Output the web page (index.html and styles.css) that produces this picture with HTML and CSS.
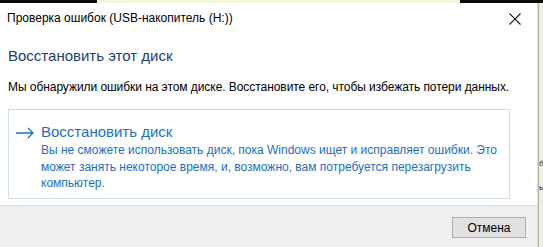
FILE: index.html
```html
<!DOCTYPE html>
<html>
<head>
   <title>Проверка ошибок</title>
   <link rel="stylesheet" href="styles.css">
</head>
<body>
   <!-- полоска фона сверху -->
   <div class="top-strip">
       <div class="strip-dark strip-left"></div>
       <div class="strip-light"></div>
       <div class="strip-dark strip-right"></div>
   </div>

   <div class="screen">
       <!-- окно диалога -->
       <div class="dialog">
           <div class="title-bar">
               <span class="title-text">Проверка ошибок (USB-накопитель (H:))</span>
               <span class="close-btn">
                   <svg width="12" height="12" viewBox="0 0 12 12">
                       <path d="M0.5 0.5 L11.5 11.5 M11.5 0.5 L0.5 11.5" stroke="#111" stroke-width="1.1" fill="none"/>
                   </svg>
               </span>
           </div>

           <div class="content">
               <h1 class="main-instruction">Восстановить этот диск</h1>
               <p class="message">Мы обнаружили ошибки на этом диске. Восстановите его, чтобы избежать потери данных.</p>

               <!-- командная ссылка -->
               <div class="command-link">
                   <svg class="arrow" width="20" height="12" viewBox="0 0 20 12">
                       <path d="M1 6 H18 M13 1 L18 6 L13 11" stroke="#1c6fc0" stroke-width="1.3" fill="none"/>
                   </svg>
                   <div class="link-body">
                       <div class="link-title">Восстановить диск</div>
                       <div class="link-desc">Вы не сможете использовать диск, пока Windows ищет и исправляет ошибки. Это может занять некоторое время, и, возможно, вам потребуется перезагрузить компьютер.</div>
                   </div>
               </div>
           </div>

           <div class="footer">
               <button class="button">Отмена</button>
           </div>
       </div>

       <!-- окно позади диалога -->
       <div class="behind">
           <span class="behind-char">б</span>
           <span class="behind-char">ь</span>
       </div>
   </div>
</body>
</html>
```

FILE: styles.css
```css
/* базовые стили страницы */
html, body {
    margin: 0;
    height: 100%;
    overflow: hidden;
}

body {
    font-family: "Liberation Sans", Arial, sans-serif;
    font-size: 12px;
    background-color: #eef0df;
    display: flex;
    flex-direction: column;
}

/* верхняя полоска */
.top-strip {
    display: flex;
    height: 3px;
    flex-shrink: 0;
}

.strip-dark {
    background-color: #0b0b0b;
}

.strip-left {
    width: 97px;
}

.strip-right {
    width: 83px;
}

.strip-light {
    flex: 1;
    background-color: #f3f6d8;
}

/* основной ряд */
.screen {
    display: flex;
    flex: 1;
}

/* окно диалога */
.dialog {
    width: 537px;
    background-color: #ffffff;
    display: flex;
    flex-direction: column;
    border-right: 1px solid #d9ddd8;
    flex-shrink: 0;
}

.title-bar {
    display: flex;
    justify-content: space-between;
    align-items: center;
    height: 30px;
    padding: 0 0 0 7px;
}

.title-text {
    color: #000;
    font-size: 12px;
}

.close-btn {
    width: 44px;
    display: flex;
    justify-content: center;
    padding-top: 2px;
}

.content {
    padding: 0 27px 0 8px;
    height: 172px;
}

.main-instruction {
    margin: 14px 0 0 0;
    font-size: 15px;
    line-height: 18px;
    font-weight: normal;
    color: #1e3d70;
}

.message {
    margin: 14px -10px 0 0;
    line-height: 16px;
    color: #000;
    white-space: nowrap;
    letter-spacing: -0.06px;
}

/* командная ссылка */
.command-link {
    display: flex;
    margin-top: 14px;
    border: 1px solid #cddeed;
    padding: 13px 8px 6px 6px;
    gap: 6px;
}

.arrow {
    margin-top: 4px;
    flex-shrink: 0;
}

.link-title {
    font-size: 15px;
    color: #1c6fc0;
    line-height: 18px;
}

.link-desc {
    color: #1c6fc0;
    line-height: 16.6px;
    margin-top: 1px;
}

/* нижняя панель */
.footer {
    flex: 1;
    background-color: #f0f0f0;
    border-top: 1px solid #dfdfdf;
    display: flex;
    justify-content: flex-end;
    align-items: flex-start;
    padding: 11px 11px 0 0;
}

.button {
    font-family: inherit;
    font-size: 12px;
    width: 74px;
    height: 21px;
    padding: 0;
    background-color: #e1e1e1;
    border: 1px solid #adadad;
    color: #000;
}

/* окно позади */
.behind {
    flex: 1;
    overflow: hidden;
    border-left: 1px solid #aeb4a8;
    display: flex;
    flex-direction: column;
    font-size: 8px;
    color: #222;
    padding-top: 156px;
    gap: 14px;
}

.behind-char {
    line-height: 10px;
}
```
